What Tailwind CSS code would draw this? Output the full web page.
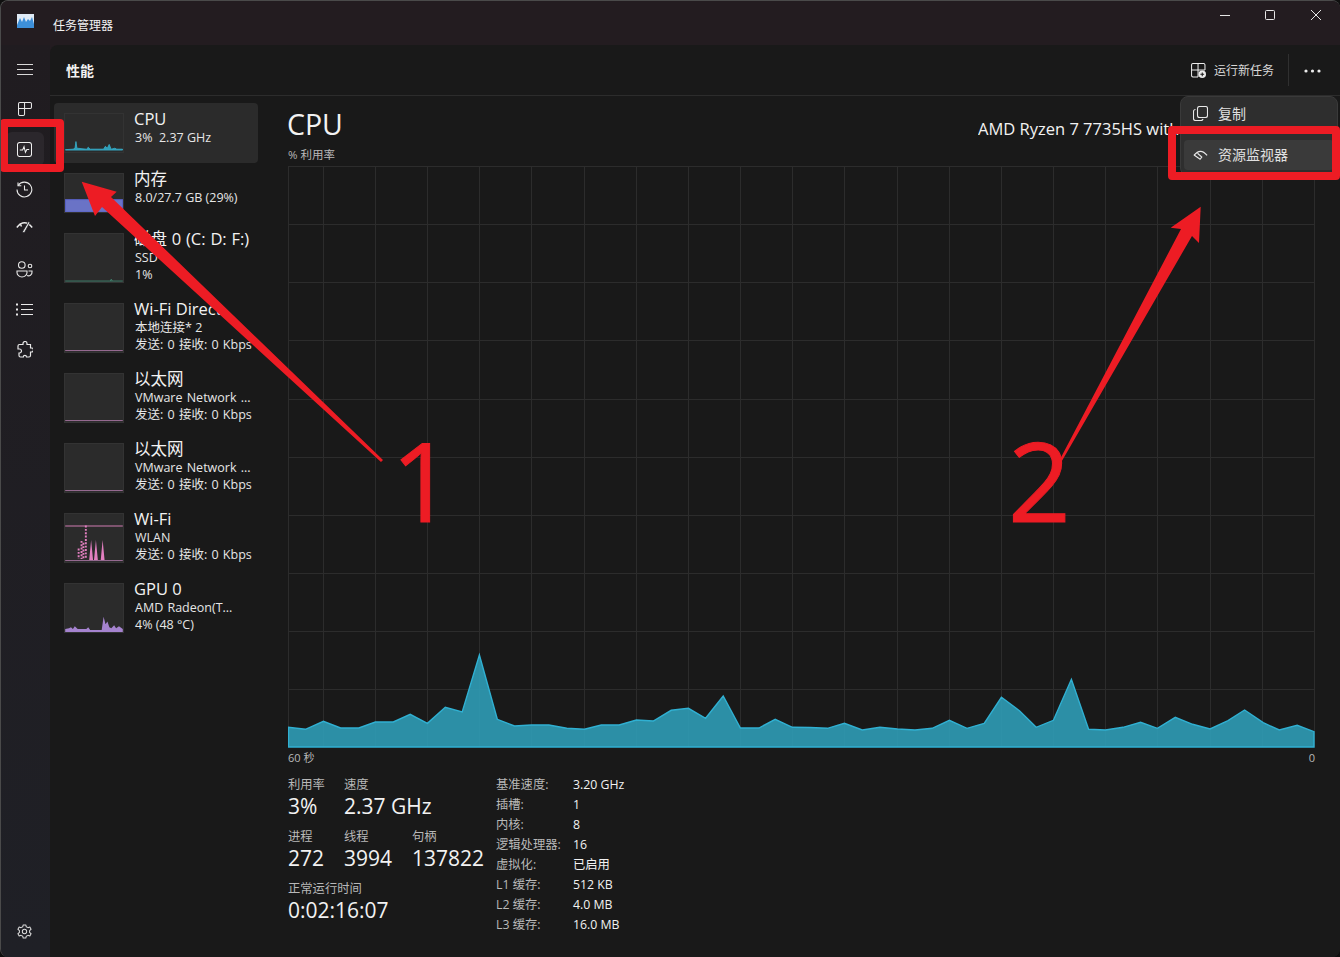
<!DOCTYPE html>
<html lang="zh-CN">
<head>
<meta charset="UTF-8">
<title>任务管理器</title>
<script src="https://cdn.jsdelivr.net/npm/@tailwindcss/browser@4"></script>
</head>
<body class="w-[1340px] h-[957px] overflow-hidden bg-[#0f0f0f] text-[#f2f2f2] font-['Open_Sans','Noto_Sans_CJK_SC',sans-serif]">
<div class="relative flex flex-col w-full h-full rounded-lg border-l border-t border-[#4a4a4a] bg-[#231c20] overflow-hidden">

  <!-- title bar -->
  <div class="flex items-center h-[44px] shrink-0 bg-[#231c20]">
    <svg class="ml-[16px] w-[17px] h-[14px] mb-[4px]" viewBox="0 0 17 14"><rect width="17" height="14" fill="#dfeaf5"/><path d="M0 11 L3 4 L5 8 L7 3 L9 8 L11 5 L13 7 L15 3 L17 10 V14 H0Z" fill="#3d8fd8"/></svg>
    <span class="ml-[19px] mt-[5px] text-[12px]">任务管理器</span>
    <div class="ml-auto flex items-center mb-[16px]">
      <svg class="w-[10px] h-[10px] mr-[35px]" viewBox="0 0 10 10"><path d="M0 5.5H10" stroke="#e6e6e6"/></svg>
      <svg class="w-[10px] h-[10px] mr-[36px]" viewBox="0 0 10 10"><rect x=".5" y=".5" width="9" height="9" rx="1" fill="none" stroke="#e6e6e6"/></svg>
      <svg class="w-[10px] h-[10px] mr-[19px]" viewBox="0 0 10 10"><path d="M0 0L10 10M10 0L0 10" stroke="#e6e6e6"/></svg>
    </div>
  </div>

  <div class="flex flex-1 min-h-0">
    <!-- nav rail -->
    <nav class="w-[49px] shrink-0 pr-[2px] pt-[4px] bg-gradient-to-b from-[#201c20] to-[#1f2026] flex flex-col items-center">
      <div class="h-[40px] flex items-center">
        <svg class="w-[16px] h-[16px]" viewBox="0 0 16 16" fill="none" stroke="#d8d8d8"><path d="M0 3.5H16M0 8.5H16M0 13.5H16"/></svg>
      </div>
      <div class="h-[40px] flex items-center">
        <svg class="w-[14px] h-[14px]" viewBox="0 0 16 16" fill="none" stroke="#e8e8e8" stroke-width="1.2"><path d="M.6 2A1.5 1.5 0 0 1 2 .6H14A1.5 1.5 0 0 1 15.4 2V6A1.5 1.5 0 0 1 14 7.5H7.5V14A1.5 1.5 0 0 1 6 15.4H2A1.5 1.5 0 0 1 .6 14Z"/><path d="M.6 7.5H7.5M7.5 .6V7.5"/></svg>
      </div>
      <div class="h-[40px] flex items-center">
        <div class="w-[38px] h-[34px] rounded-md bg-[#2b272c] flex items-center justify-center">
          <svg class="w-[15px] h-[15px]" viewBox="0 0 16 16" fill="none" stroke="#f0f0f0" stroke-width="1.1"><rect x=".5" y=".5" width="15" height="15" rx="2.5"/><path d="M3 8.5H6L7.5 5 9 11 10.5 8H13"/></svg>
        </div>
      </div>
      <div class="h-[40px] flex items-center">
        <svg class="w-[17px] h-[17px]" viewBox="0 0 17 17" fill="none" stroke="#e8e8e8" stroke-width="1.1"><path d="M2.2 4.5A7.4 7.4 0 1 1 1 8.5"/><path d="M2 1.5V4.8H5.3"/><path d="M8.5 4.5V9H12"/></svg>
      </div>
      <div class="h-[40px] flex items-center -mt-[2px] mb-[2px]">
        <svg class="w-[17px] h-[14px]" viewBox="0 0 17 14" fill="none" stroke="#e8e8e8" stroke-width="1.5"><path d="M.8 7.5Q8.5 -2 16.2 7.5"/><path d="M4 3.5L5.5 6.5"/><polygon points="12.5,1.5 14,2.5 8.3,13 6.3,12" fill="#e8e8e8" stroke="#1f1f24" stroke-width=".8"/></svg>
      </div>
      <div class="h-[40px] flex items-center">
        <svg class="w-[17px] h-[17px]" viewBox="0 0 17 17" fill="none" stroke="#e8e8e8" stroke-width="1.1"><circle cx="5.8" cy="4" r="3.3"/><circle cx="14" cy="5" r="1.8"/><path d="M1 10H11V11.5A5 4.5 0 0 1 1 11.5Z"/><path d="M12.5 10H16V11A3.5 3.5 0 0 1 11 14.5"/></svg>
      </div>
      <div class="h-[40px] flex items-center">
        <svg class="w-[17px] h-[13px]" viewBox="0 0 17 13" fill="none" stroke="#e8e8e8" stroke-width="1.1"><path d="M5 1.5H17M5 6.5H17M5 11.5H17"/><path d="M0 1.5H2M0 6.5H2M0 11.5H2" stroke-width="2"/></svg>
      </div>
      <div class="h-[40px] flex items-center">
        <svg class="w-[16px] h-[17px]" viewBox="0 0 16 17" fill="none" stroke="#e8e8e8" stroke-width="1.2"><path d="M6 2.5A2 2 0 0 1 10 2.5V3.5H13.5V7H14.5A2 2 0 0 1 14.5 11H13.5V14.5A1.5 1.5 0 0 1 12 16H9.5A1.6 1.6 0 0 0 6.3 16H3.5A1.5 1.5 0 0 1 2 14.5V12H2.5A2 2 0 0 0 2.5 8H1V5A1.5 1.5 0 0 1 2.5 3.5H6Z"/></svg>
      </div>
      <svg class="w-[15px] h-[15px] mt-auto mb-[18px]" viewBox="0 0 16 16" fill="none" stroke="#d8d8d8" stroke-width="1.1"><circle cx="8" cy="8" r="2.3"/><path d="M6.6 1H9.4L9.9 3 11.7 3.9 13.7 3.2 15 5.6 13.4 7 13.4 9 15 10.4 13.7 12.8 11.7 12.1 9.9 13 9.4 15H6.6L6.1 13 4.3 12.1 2.3 12.8 1 10.4 2.6 9 2.6 7 1 5.6 2.3 3.2 4.3 3.9 6.1 3Z" stroke-linejoin="round"/></svg>
    </nav>

    <!-- content panel -->
    <main class="flex-1 min-w-0 bg-[#191919] rounded-tl-lg flex flex-col">
      <header class="h-[51px] shrink-0 border-b border-[#2c2c2c] flex items-center pl-[16px]">
        <h1 class="text-[14px] font-semibold">性能</h1>
        <div class="ml-auto flex items-center">
          <svg class="w-[15px] h-[15px]" viewBox="0 0 16 16" fill="none" stroke="#ececec" stroke-width="1.1"><path d="M7.5 14.9H2A1.5 1.5 0 0 1 .6 13.5V2A1.5 1.5 0 0 1 2 .6H13.5A1.5 1.5 0 0 1 14.9 2V7.5M.6 7.5H14.9M7.5 .6V14.9"/><circle cx="12" cy="12" r="4" fill="#ececec" stroke="none"/><path d="M12 10V14M10 12H14" stroke="#191919"/></svg>
          <span class="ml-[8px] mt-[1px] text-[12px] text-[#d8d8d8]">运行新任务</span>
          <div class="ml-[14px] w-px h-[32px] bg-[#303030]"></div>
          <svg class="ml-[15px] mr-[19px] mt-[1px] w-[17px] h-[4px]" viewBox="0 0 17 4" fill="#ececec"><circle cx="2" cy="2" r="1.6"/><circle cx="8.5" cy="2" r="1.6"/><circle cx="15" cy="2" r="1.6"/></svg>
        </div>
      </header>

      <div class="flex flex-1 min-h-0">
        <!-- device list -->
        <aside class="w-[238px] shrink-0 pl-[4px] pr-[30px] pt-[7px]">
          <div class="flex h-[60px] w-[204px] pt-[10px] pl-[10px] rounded-sm bg-[#2b2b2b]">
            <svg class="w-[60px] h-[40px] shrink-0 bg-[#2b2b2b] border border-[#333]" viewBox="0 0 60 40"><path d="M0 37.5 L8 37 10 36 11 29 12 36 22 37 24 35 26 37 40 37 42 34 44 36 46 32 48 37 52 36 54 37 60 37V38H0Z" fill="#2f9fb8" stroke="#37b3d0" stroke-width=".8"/></svg>
            <div class="ml-[10px] -mt-[4px]">
              <div class="text-[16.5px] leading-[20px]">CPU</div>
              <div class="ml-px text-[12.5px] leading-[17px] text-[#e6e6e6]">3%&nbsp; 2.37 GHz</div>
            </div>
          </div>
          <div class="flex h-[60px] pt-[10px] pl-[10px]">
            <svg class="w-[60px] h-[40px] shrink-0 bg-[#2b2b2b] border border-[#333]" viewBox="0 0 60 40"><rect x="0" y="27" width="60" height="13" fill="#6a73c6" stroke="#5862c9"/></svg>
            <div class="ml-[10px] -mt-[4px]">
              <div class="text-[16.5px] leading-[20px]">内存</div>
              <div class="ml-px text-[12.5px] leading-[17px] text-[#e6e6e6] whitespace-nowrap">8.0/27.7 GB (29%)</div>
            </div>
          </div>
          <div class="flex h-[70px] pt-[10px] pl-[10px]">
            <svg class="w-[60px] h-[50px] shrink-0 bg-[#2b2b2b] border border-[#333]" viewBox="0 0 60 50"><path d="M0 49H60" stroke="#3f7f6c"/><path d="M47 49l1-2 1 2" stroke="#3f7f6c" fill="none"/></svg>
            <div class="ml-[10px] -mt-[4px]">
              <div class="text-[16.5px] leading-[20px] whitespace-nowrap [word-spacing:.5px]">磁盘 0 (C: D: F:)</div>
              <div class="ml-px text-[12.5px] leading-[17px] text-[#e6e6e6]">SSD</div>
              <div class="ml-px text-[12.5px] leading-[17px] text-[#e6e6e6]">1%</div>
            </div>
          </div>
          <div class="flex h-[70px] pt-[10px] pl-[10px]">
            <svg class="w-[60px] h-[50px] shrink-0 bg-[#2b2b2b] border border-[#333]" viewBox="0 0 60 50"><path d="M0 48.5H60" stroke="#a0709a"/></svg>
            <div class="ml-[10px] -mt-[4px]">
              <div class="text-[16.5px] leading-[20px] whitespace-nowrap">Wi-Fi Direct</div>
              <div class="ml-px text-[12.5px] leading-[17px] text-[#e6e6e6] whitespace-nowrap">本地连接* 2</div>
              <div class="ml-px text-[12.5px] leading-[17px] text-[#e6e6e6] whitespace-nowrap [word-spacing:1px]">发送: 0 接收: 0 Kbps</div>
            </div>
          </div>
          <div class="flex h-[70px] pt-[10px] pl-[10px]">
            <svg class="w-[60px] h-[50px] shrink-0 bg-[#2b2b2b] border border-[#333]" viewBox="0 0 60 50"><path d="M0 48.5H60" stroke="#a0709a"/></svg>
            <div class="ml-[10px] -mt-[4px]">
              <div class="text-[16.5px] leading-[20px] whitespace-nowrap">以太网</div>
              <div class="ml-px text-[12.5px] leading-[17px] text-[#e6e6e6] whitespace-nowrap [word-spacing:1px]">VMware Network ...</div>
              <div class="ml-px text-[12.5px] leading-[17px] text-[#e6e6e6] whitespace-nowrap [word-spacing:1px]">发送: 0 接收: 0 Kbps</div>
            </div>
          </div>
          <div class="flex h-[70px] pt-[10px] pl-[10px]">
            <svg class="w-[60px] h-[50px] shrink-0 bg-[#2b2b2b] border border-[#333]" viewBox="0 0 60 50"><path d="M0 48.5H60" stroke="#a0709a"/></svg>
            <div class="ml-[10px] -mt-[4px]">
              <div class="text-[16.5px] leading-[20px] whitespace-nowrap">以太网</div>
              <div class="ml-px text-[12.5px] leading-[17px] text-[#e6e6e6] whitespace-nowrap [word-spacing:1px]">VMware Network ...</div>
              <div class="ml-px text-[12.5px] leading-[17px] text-[#e6e6e6] whitespace-nowrap [word-spacing:1px]">发送: 0 接收: 0 Kbps</div>
            </div>
          </div>
          <div class="flex h-[70px] pt-[10px] pl-[10px]">
            <svg class="w-[60px] h-[50px] shrink-0 bg-[#2b2b2b] border border-[#333]" viewBox="0 0 60 50"><path d="M0 12.5H60" stroke="#d77fb8"/><path d="M0 48.5H60" stroke="#a0709a"/><path d="M21.5 12V47" stroke="#e27fc0" stroke-width="2" stroke-dasharray="2 1.5"/><path d="M17 28V47M14 36V47M19 30V47" stroke="#e27fc0" stroke-width="2" stroke-dasharray="2 1.5"/><path d="M25 48 L27 27 29 48ZM30 48 L32 27 34 48ZM37 48 L39 27 41 48Z" fill="#e27fc0"/></svg>
            <div class="ml-[10px] -mt-[4px]">
              <div class="text-[16.5px] leading-[20px]">Wi-Fi</div>
              <div class="ml-px text-[12.5px] leading-[17px] text-[#e6e6e6]">WLAN</div>
              <div class="ml-px text-[12.5px] leading-[17px] text-[#e6e6e6] whitespace-nowrap [word-spacing:1px]">发送: 0 接收: 0 Kbps</div>
            </div>
          </div>
          <div class="flex h-[70px] pt-[10px] pl-[10px]">
            <svg class="w-[60px] h-[50px] shrink-0 bg-[#2b2b2b] border border-[#333]" viewBox="0 0 60 50"><path d="M0 49V47L4 46 6 45 8 47 10 44 13 47 22 47 24 45 26 48 38 48 40 34 42 42 44 39 46 45 48 46 51 43 53 46 56 44 60 47V50H0Z" fill="#a583cf"/></svg>
            <div class="ml-[10px] -mt-[4px]">
              <div class="text-[16.5px] leading-[20px]">GPU 0</div>
              <div class="ml-px text-[12.5px] leading-[17px] text-[#e6e6e6] whitespace-nowrap [word-spacing:1px]">AMD Radeon(T...</div>
              <div class="ml-px text-[12.5px] leading-[17px] text-[#e6e6e6]">4% (48 °C)</div>
            </div>
          </div>
        </aside>

        <!-- detail -->
        <section class="flex-1 min-w-0 pr-[24px] flex flex-col">
          <div class="flex items-start h-[44px] mt-[8px]">
            <div class="-ml-[1px] text-[28.5px] leading-[38px] mt-[1px]">CPU</div>
            <div class="ml-auto mr-[134px] w-[204px] overflow-hidden mt-[14px] text-[16.5px] leading-[22px] whitespace-nowrap">AMD Ryzen 7 7735HS with Radeon Graphics</div>
          </div>
          <div class="text-[11.5px] leading-[14px] text-[#b8b8b8] h-[18px]">% 利用率</div>
          <svg class="w-[1027px] h-[582px] shrink-0" viewBox="288 166 1027 582">
            <g stroke="#2c2c2c" fill="none">
              <path d="M288 166.5H1314M288 224.5H1314M288 282.5H1314M288 340.5H1314M288 399.5H1314M288 457.5H1314M288 515.5H1314M288 573.5H1314M288 631.5H1314M288 689.5H1314"/>
              <path d="M288.5 166V747M323.5 166V747M375.5 166V747M427.5 166V747M479.5 166V747M531.5 166V747M584.5 166V747M636.5 166V747M688.5 166V747M740.5 166V747M792.5 166V747M844.5 166V747M897.5 166V747M949.5 166V747M1001.5 166V747M1053.5 166V747M1105.5 166V747M1157.5 166V747M1210.5 166V747M1262.5 166V747M1314.5 166V747"/>
            </g>
            <polygon fill="#2f9cb6" fill-opacity=".9" stroke="#30b0d2" stroke-width="1.4" points="288.5,747 288.5,727.3 305.5,729.3 323.4,721.3 340.6,728 358.8,728 375.4,722 393.3,722 410.2,714.3 427.4,723.3 445.3,707.3 462.2,712 479.4,655 497.3,719.3 514.5,726 531.4,725 548.9,725 566.8,728.3 584.4,729.3 601.3,725 619.2,725 636.4,720 653.3,721 671.2,710.3 688.4,708.3 705.6,718.3 723.2,696 740.4,728 759,728 775.2,719.3 792.4,727.3 809.9,727.5 827.5,728.3 844.4,723.3 862.3,730 879.9,727.3 897.5,729 915,730 932.2,728.3 949.4,720.3 967,728.3 984.2,723.3 1001.4,697.3 1019.7,711 1036.2,727.3 1053.4,720.3 1071.4,679.3 1088.6,729.3 1105.4,730 1123,727.3 1140.6,722.3 1157.4,728.3 1175.3,717.3 1192.6,724.3 1210.1,729 1228,720.7 1244.6,710 1263.2,722.7 1279.3,730 1297.2,725.3 1314,731.7 1314,747"/>
          </svg>
          <div class="flex justify-between text-[11px] leading-[14px] text-[#b8b8b8] mt-[3px] mb-[12px]">
            <span>60 秒</span><span class="mr-[1px]">0</span>
          </div>
          <div class="flex">
            <div class="w-[208px] shrink-0">
              <div class="flex">
                <div class="w-[56px]"><div class="text-[12.3px] leading-[15px] text-[#b8b8b8]">利用率</div><div class="text-[21px] leading-[28px]">3%</div></div>
                <div><div class="text-[12.3px] leading-[15px] text-[#b8b8b8]">速度</div><div class="text-[21px] leading-[28px] whitespace-nowrap">2.37 GHz</div></div>
              </div>
              <div class="flex mt-[9px]">
                <div class="w-[56px]"><div class="text-[12.3px] leading-[15px] text-[#b8b8b8]">进程</div><div class="text-[21px] leading-[28px]">272</div></div>
                <div class="w-[68px]"><div class="text-[12.3px] leading-[15px] text-[#b8b8b8]">线程</div><div class="text-[21px] leading-[28px]">3994</div></div>
                <div><div class="text-[12.3px] leading-[15px] text-[#b8b8b8]">句柄</div><div class="text-[21px] leading-[28px]">137822</div></div>
              </div>
              <div class="mt-[9px]"><div class="text-[12.3px] leading-[15px] text-[#b8b8b8]">正常运行时间</div><div class="text-[21px] leading-[28px]">0:02:16:07</div></div>
            </div>
            <dl class="grid grid-cols-[77px_auto] auto-rows-[20px] text-[12.3px] leading-[20px] -mt-[2px]">
              <dt class="text-[#b8b8b8]">基准速度:</dt><dd>3.20 GHz</dd>
              <dt class="text-[#b8b8b8]">插槽:</dt><dd>1</dd>
              <dt class="text-[#b8b8b8]">内核:</dt><dd>8</dd>
              <dt class="text-[#b8b8b8] whitespace-nowrap">逻辑处理器:</dt><dd>16</dd>
              <dt class="text-[#b8b8b8]">虚拟化:</dt><dd>已启用</dd>
              <dt class="text-[#b8b8b8]">L1 缓存:</dt><dd>512 KB</dd>
              <dt class="text-[#b8b8b8]">L2 缓存:</dt><dd>4.0 MB</dd>
              <dt class="text-[#b8b8b8]">L3 缓存:</dt><dd>16.0 MB</dd>
            </dl>
          </div>
        </section>
      </div>
    </main>
  </div>

  <!-- overflow menu -->
  <div class="absolute left-[1179px] top-[95px] w-[158px] h-[80px] rounded-lg bg-[#2e2e2e] border border-[#3a3a3a] px-[3px]">
    <div class="flex items-center h-[33px] pl-[9px]">
      <svg class="w-[15px] h-[15px]" viewBox="0 0 15 15" fill="none" stroke="#e8e8e8" stroke-width="1.1"><rect x="4.5" y=".5" width="10" height="11" rx="2"/><path d="M2.5 3.5A2 2 0 0 0 .5 5.5V12.5A2 2 0 0 0 2.5 14.5H8A2 2 0 0 0 10 13"/></svg>
      <span class="ml-[10px] text-[14px] leading-[18px] text-[#e0e0e0]">复制</span>
    </div>
    <div class="flex items-center h-[30px] pl-[9px] mt-[10px] rounded bg-[#3a3a3a]">
      <svg class="w-[15px] h-[12px]" viewBox="0 0 17 14" fill="none" stroke="#e8e8e8" stroke-width="1.3"><path d="M.8 7.5Q8.5 -2 16.2 7.5"/><path d="M1 7L8 12 10 9.5 5 5"/></svg>
      <span class="ml-[10px] text-[14px] leading-[18px] text-[#e0e0e0]">资源监视器</span>
    </div>
  </div>

  <!-- annotations -->
  <div class="absolute left-[-1px] top-[118px] w-[64px] h-[53px] border-[8px] border-[#ed1c24] rounded-[4px]"></div>
  <div class="absolute left-[1167px] top-[125px] w-[172px] h-[54px] border-[8px] border-[#ed1c24] rounded-[4px]"></div>
  <svg class="absolute left-[-1px] top-[-1px] w-[1340px] h-[957px] pointer-events-none" viewBox="0 0 1340 957" fill="#ed1c24">
    <polygon points="81.7,181.7 116.7,191.7 111,197 383,460 381,462 102,207 95,216"/>
    <polygon points="1200.7,206.7 1199,243 1192,236 1059,466 1057,465 1181,229 1170.7,227.7"/>
  </svg>
  <span class="absolute left-[390px] top-[418px] text-[#ed1c24] text-[110px] leading-[120px] font-medium [-webkit-text-stroke:1px_#ed1c24]">1</span>
  <span class="absolute left-[1007px] top-[418px] text-[#ed1c24] text-[110px] leading-[120px] font-medium [-webkit-text-stroke:1px_#ed1c24]">2</span>
</div>
</body>
</html>
